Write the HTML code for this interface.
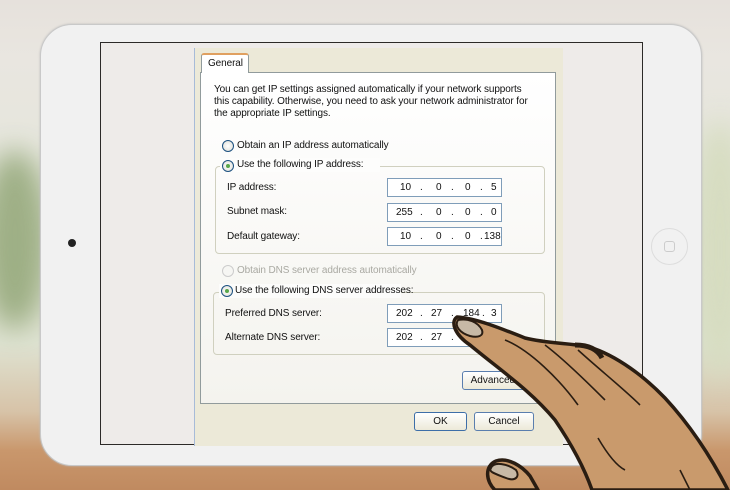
<!DOCTYPE html>
<html><head><meta charset="utf-8"><style>
*{margin:0;padding:0;box-sizing:border-box}
body{width:730px;height:490px;overflow:hidden;position:relative;font-family:"Liberation Sans",Arial,sans-serif;
background:linear-gradient(180deg,#e6e1dc 0%,#e9e6e0 12%,#e4e6da 40%,#dfe3d2 70%,#d7c3a8 84%,#c9976c 92%,#c08a60 100%);}
.blob{position:absolute;border-radius:50%;filter:blur(14px)}
.tab{position:absolute;left:40px;top:24px;width:662px;height:442px;background:#f1f1f1;border-radius:32px;border:1px solid #c9c9c9;box-shadow:0 0 2px #bbb}
.screen{position:absolute;left:100px;top:42px;width:543px;height:403px;background:#eeebe9;border:1px solid #2c2a28}
.dlg{position:absolute;left:93px;top:5px;width:369px;height:398px;background:#ece9d8;border-left:1px solid #a7bbd8}
.panel{position:absolute;left:99px;top:29px;width:356px;height:332px;background:linear-gradient(180deg,#fff,#f4f3ee);border:1px solid #919b9c}
.t{position:absolute;font-size:10px;color:#111;white-space:nowrap;letter-spacing:-0.1px}
.fs{position:absolute;border:1px solid #d0d0bf;border-radius:4px}
.rad{position:absolute;width:12px;height:12px;border-radius:50%;border:1px solid #1c5180;background:radial-gradient(#fff,#dcdcd5)}
.rad.on::after{content:"";position:absolute;left:3px;top:3px;width:4px;height:4px;border-radius:50%;background:#58a74a}
.ip{position:absolute;width:115px;height:19px;border:1px solid #7f9db9;background:#fff;font-size:10px;color:#111}
.ip span{position:absolute;top:3px}
.btn{position:absolute;height:19px;border:1px solid #003c74;border-radius:3px;background:linear-gradient(#fff,#ece9d8);font-size:10px;text-align:center;line-height:17px;color:#111}
</style></head><body>
<div class="blob" style="left:-20px;top:150px;width:70px;height:180px;background:#8da271;opacity:.8"></div>
<div class="blob" style="left:690px;top:120px;width:60px;height:260px;background:#d6dcc0"></div>
<div class="tab">
<div style="position:absolute;left:27px;top:214px;width:8px;height:8px;border-radius:50%;background:#222"></div>
<div style="position:absolute;left:610px;top:203px;width:37px;height:37px;border-radius:50%;border:1px solid #ddd"></div>
<div style="position:absolute;left:623px;top:216px;width:11px;height:11px;border-radius:3px;border:1px solid #ccc"></div>
</div>
<div class="screen">
<div class="dlg"></div>
<div style="position:absolute;left:100px;top:10px;width:48px;height:20px;background:#fff;border:1px solid #919b9c;border-bottom:none;border-top:2px solid #e0a060;border-radius:3px 3px 0 0;z-index:2"><span class="t" style="left:6px;top:3px">General</span></div>
<div class="panel"></div>
</div>
<div class="t" style="left:214px;top:84px;line-height:12px">You can get IP settings assigned automatically if your network supports<br>this capability. Otherwise, you need to ask your network administrator for<br>the appropriate IP settings.</div>
<div class="rad" style="left:222px;top:140px"></div><div class="t" style="left:237px;top:140px">Obtain an IP address automatically</div>
<div class="fs" style="left:215px;top:166px;width:330px;height:88px"></div>
<div style="position:absolute;left:220px;top:158px;width:160px;height:14px;background:#fdfdfc"></div>
<div class="rad on" style="left:222px;top:160px"></div><div class="t" style="left:237px;top:159px">Use the following IP address:</div>
<div class="t" style="left:227px;top:182px">IP address:</div>
<div class="t" style="left:227px;top:206px">Subnet mask:</div>
<div class="t" style="left:227px;top:231px">Default gateway:</div>
<div class="ip" style="left:387px;top:178px"><span style="left:12px">10</span><span style="left:32px">.</span><span style="left:48px">0</span><span style="left:63px">.</span><span style="left:77px">0</span><span style="left:92px">.</span><span style="left:103px">5</span></div>
<div class="ip" style="left:387px;top:203px"><span style="left:8px">255</span><span style="left:32px">.</span><span style="left:48px">0</span><span style="left:63px">.</span><span style="left:77px">0</span><span style="left:92px">.</span><span style="left:103px">0</span></div>
<div class="ip" style="left:387px;top:227px"><span style="left:12px">10</span><span style="left:32px">.</span><span style="left:48px">0</span><span style="left:63px">.</span><span style="left:77px">0</span><span style="left:92px">.</span><span style="left:96px">138</span></div>
<div class="rad" style="left:222px;top:265px;border-color:#ccc;background:#f6f6f3"></div><div class="t" style="left:237px;top:265px;color:#a9a9a2">Obtain DNS server address automatically</div>
<div class="fs" style="left:213px;top:292px;width:332px;height:63px"></div>
<div style="position:absolute;left:219px;top:284px;width:182px;height:14px;background:#fcfcfb"></div>
<div class="rad on" style="left:221px;top:285px"></div><div class="t" style="left:235px;top:285px">Use the following DNS server addresses:</div>
<div class="t" style="left:225px;top:308px">Preferred DNS server:</div>
<div class="t" style="left:225px;top:332px">Alternate DNS server:</div>
<div class="ip" style="left:387px;top:304px"><span style="left:8px">202</span><span style="left:32px">.</span><span style="left:43px">27</span><span style="left:63px">.</span><span style="left:75px">184</span><span style="left:94px">.</span><span style="left:103px">3</span></div>
<div class="ip" style="left:387px;top:328px"><span style="left:8px">202</span><span style="left:32px">.</span><span style="left:43px">27</span><span style="left:63px">.</span><span style="left:75px">184</span></div>
<div class="btn" style="left:462px;top:371px;width:70px;border-color:#5a7eae">Advanced...</div>
<div class="btn" style="left:414px;top:412px;width:53px;border-color:#3d6ea8">OK</div>
<div class="btn" style="left:474px;top:412px;width:60px;border-color:#5a7eae">Cancel</div>
<svg width="730" height="490" style="position:absolute;left:0;top:0" viewBox="0 0 730 490">
<g stroke="#2a1d12" stroke-width="3.5" stroke-linejoin="round" fill="#c99a6c">
<path d="M495,490 C486,482 484,466 496,461 C508,457 522,466 530,476 L538,490 Z"/>
<path d="M457,317 C475,318 500,328 525,338 C545,343 565,343 585,346 C610,352 640,372 665,398 C690,425 710,455 728,490 L592,490 C585,470 572,445 555,420 C530,390 500,370 470,345 C455,335 450,322 457,317 Z"/>
</g>
<g fill="#c7b9a6" stroke="#2a1d12" stroke-width="2">
<path d="M458,320 C468,318 478,322 482,330 C484,336 478,338 470,336 C460,333 454,326 458,320 Z"/>
<path d="M491,468 C494,461 508,464 516,470 C520,476 516,482 506,478 C496,474 488,472 491,468 Z"/>
</g>
<g stroke="#2a1d12" stroke-width="1.6" fill="none">
<path d="M505,340 C530,350 560,380 578,405"/>
<path d="M545,345 C565,360 590,385 605,400"/>
<path d="M578,350 C600,370 625,390 640,405"/>
<path d="M598,438 C605,450 615,465 625,470"/>
<path d="M680,470 L690,490"/>
</g>
<path d="M575,345 C590,345 598,350 602,358" stroke="#2a1d12" stroke-width="5" fill="none"/>
</svg>
</body></html>
